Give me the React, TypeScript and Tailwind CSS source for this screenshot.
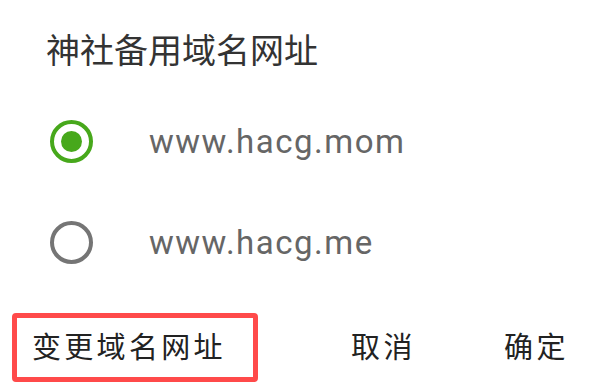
import React, { useState } from 'react';

const domains = ['www.hacg.mom', 'www.hacg.me'];

export default function App() {
  const [selected, setSelected] = useState(0);

  return (
    <div
      className="w-[600px] h-[388px] bg-white overflow-hidden flex flex-col select-none"
      style={{ fontFamily: 'Roboto, "Noto Sans CJK SC", sans-serif' }}
    >
      {/* Title */}
      <div className="pt-[31px] pl-[46px] h-[91px]">
        <h1 className="text-[34px] leading-[40px] text-[#333333] font-normal">神社备用域名网址</h1>
      </div>

      {/* Radio options */}
      <div className="flex flex-col">
        {domains.map((d, i) => {
          const checked = i === selected;
          return (
            <button
              key={d}
              type="button"
              onClick={() => setSelected(i)}
              className="h-[101px] flex items-center pl-[50px] text-left"
            >
              <span
                className={
                  'w-[43px] h-[43px] rounded-full border-[4px] flex items-center justify-center shrink-0 ' +
                  (checked ? 'border-[#47a81b]' : 'border-[#757575]')
                }
              >
                {checked && <span className="w-[21px] h-[21px] rounded-full bg-[#47a81b]" />}
              </span>
              <span className="ml-[56px] text-[33px] leading-none tracking-[1.5px] text-[#666666]">{d}</span>
            </button>
          );
        })}
      </div>

      {/* Actions */}
      <div className="flex items-center mt-[20px] h-[69px] pl-[12px]">
        <button
          type="button"
          className="w-[246px] h-[69px] border-[5px] border-[#ff4a4a] rounded-[4px] flex items-center pl-[15px] pt-[3px] text-[29px] tracking-[3.3px] text-[#222222]"
        >
          变更域名网址
        </button>
        <button type="button" className="ml-[93px] pt-[3px] text-[29px] tracking-[3.5px] text-[#222222]">
          取消
        </button>
        <button type="button" className="ml-[88px] pt-[3px] text-[29px] tracking-[3.5px] text-[#222222]">
          确定
        </button>
      </div>
    </div>
  );
}
